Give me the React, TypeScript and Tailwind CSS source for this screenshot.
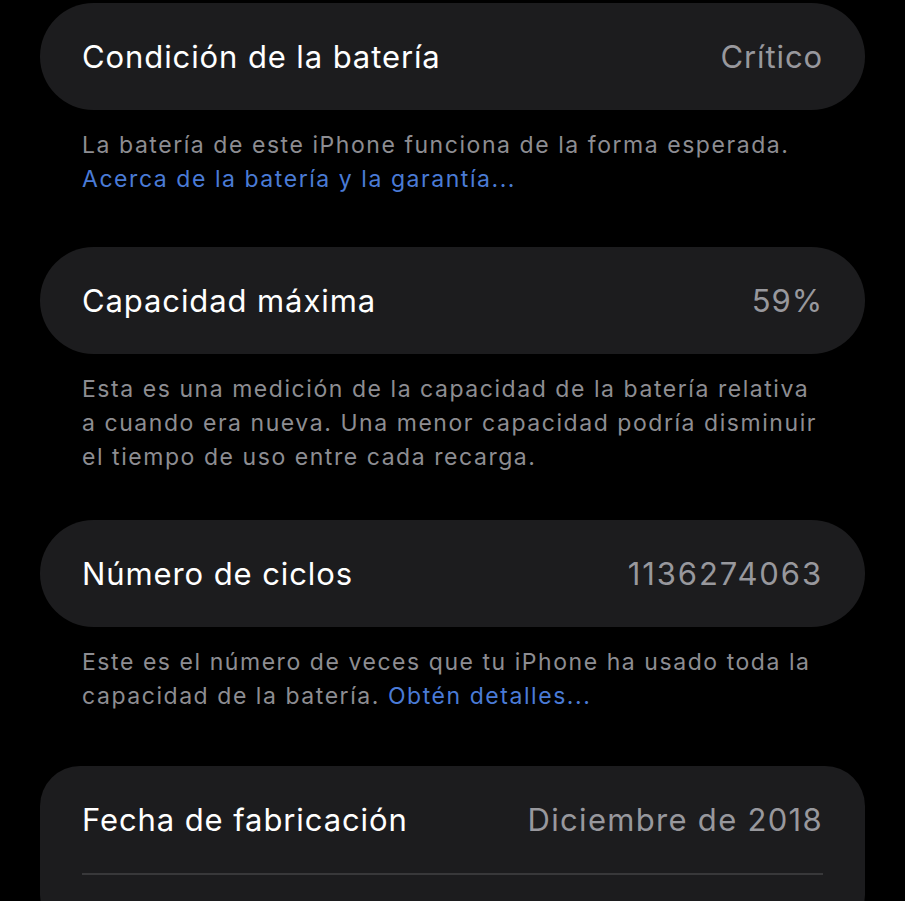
import React from 'react';
import clsx from 'clsx';

const Row = ({ label, value, spacing }: { label: string; value: string; spacing?: string }) => {
  return (
    <div className="flex h-[107px] items-center justify-between px-[42px]">
      <span className="text-[31px] leading-none tracking-[0.9px] text-white">{label}</span>
      <span className={clsx('text-[31px] leading-none text-[#98989d]', spacing ?? 'tracking-[0.9px]')}>
        {value}
      </span>
    </div>
  );
};

const Footer = ({ children, className }: { children: React.ReactNode; className: string }) => {
  return (
    <p
      className={clsx(
        'mt-[18px] px-[42px] text-[23px] leading-[34px] tracking-[1.55px] text-[#8d8d92]',
        className,
      )}>
      {children}
    </p>
  );
};

const App = () => {
  return (
    <div
      className="min-h-screen overflow-hidden bg-black px-[40px] pt-[3px]"
      style={{ fontFamily: 'Inter, "Noto Sans", sans-serif' }}>
      <div className="rounded-[54px] bg-[#1c1c1e]">
        <Row label="Condición de la batería" value="Crítico" />
      </div>
      <Footer className="mb-[51px]">
        La batería de este iPhone funciona de la forma esperada.
        <br />
        <span className="text-[#4a7bd6]">Acerca de la batería y la garantía...</span>
      </Footer>

      <div className="rounded-[54px] bg-[#1c1c1e]">
        <Row label="Capacidad máxima" value="59%" />
      </div>
      <Footer className="mb-[46px]">
        Esta es una medición de la capacidad de la batería relativa
        <br />
        a cuando era nueva. Una menor capacidad podría disminuir
        <br />
        el tiempo de uso entre cada recarga.
      </Footer>

      <div className="rounded-[54px] bg-[#1c1c1e]">
        <Row label="Número de ciclos" value="1136274063" spacing="tracking-[1.9px]" />
      </div>
      <Footer className="mb-[53px]">
        Este es el número de veces que tu iPhone ha usado toda la
        <br />
        capacidad de la batería. <span className="text-[#4a7bd6]">Obtén detalles...</span>
      </Footer>

      <div className="rounded-[40px] bg-[#1c1c1e]">
        <Row label="Fecha de fabricación" value="Diciembre de 2018" spacing="tracking-[1.3px]" />
        <div className="mx-[42px] h-[2px] bg-[#38383a]" />
        <div className="h-[60px]" />
      </div>
    </div>
  );
};

export default App;
